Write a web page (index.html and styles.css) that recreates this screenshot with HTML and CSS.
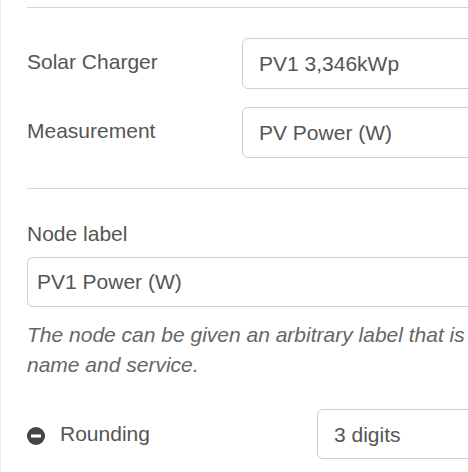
FILE: index.html
```html
<!DOCTYPE html>
<html lang="en">
<head>
<meta charset="utf-8">
<title>Node settings</title>
<link rel="stylesheet" href="styles.css">
</head>
<body>
<div class="page">
  <hr class="sep sep--top">
  <div class="row row--first">
    <label class="row-label">Solar Charger</label>
    <div class="control">PV1 3,346kWp</div>
  </div>
  <div class="row row--next">
    <label class="row-label">Measurement</label>
    <div class="control">PV Power (W)</div>
  </div>
  <hr class="sep sep--mid">
  <div class="group">
    <label class="stack-label">Node label</label>
    <div class="control control--text">PV1 Power (W)</div>
    <p class="help">The node can be given an arbitrary label that is shown instead of the device name and service.</p>
  </div>
  <div class="row row--rounding">
    <div class="toggle-label">
      <svg class="minus-icon" width="18" height="18" viewBox="0 0 18 18" aria-hidden="true">
        <circle cx="9" cy="9" r="9" fill="#454545"/>
        <rect x="4" y="7.5" width="10" height="3" fill="#fff"/>
      </svg>
      <span>Rounding</span>
    </div>
    <div class="control control--short">3 digits</div>
  </div>
</div>
</body>
</html>
```
FILE: styles.css
```css
html, body {
  margin: 0;
  padding: 0;
  background: #fff;
}
body {
  width: 468px;
  height: 472px;
  overflow: hidden;
  box-sizing: border-box;
  border-left: 1px solid #ececec;
  font-family: "Liberation Sans", Arial, sans-serif;
  font-size: 21px;
  color: #555;
}
.page {
  margin-left: 26px;
  width: 740px;
  padding-top: 7px;
}
.sep {
  margin: 0;
  border: 0;
  border-top: 1px solid #d6d6d6;
  height: 0;
}
.sep--mid {
  margin-top: 30px;
}
.row {
  display: flex;
  align-items: center;
}
.row--first { margin-top: 30px; }
.row--next { margin-top: 18px; }
.row-label {
  width: 215px;
  flex: none;
  line-height: 30px;
  margin-top: -4px;
}
.control {
  flex: 1;
  box-sizing: border-box;
  height: 51px;
  border: 1px solid #cfcfcf;
  border-radius: 6px;
  padding: 0 16px;
  display: flex;
  align-items: center;
  color: #555;
  line-height: 30px;
}
.group {
  margin-top: 30px;
}
.stack-label {
  display: block;
  line-height: 30px;
  margin-bottom: 8px;
}
.control--text {
  height: 50px;
  padding: 0 9px;
}
.help {
  margin: 13px 0 0;
  font-style: italic;
  line-height: 30px;
  color: #666;
}
.row--rounding {
  margin-top: 29px;
}
.control--short {
  height: 50px;
  padding-top: 2px;
}
.toggle-label {
  width: 290px;
  flex: none;
  display: flex;
  align-items: center;
  gap: 15px;
  line-height: 30px;
}
.minus-icon {
  flex: none;
  margin-top: 3px;
}
.toggle-label span {
  margin-top: -1px;
}
```
